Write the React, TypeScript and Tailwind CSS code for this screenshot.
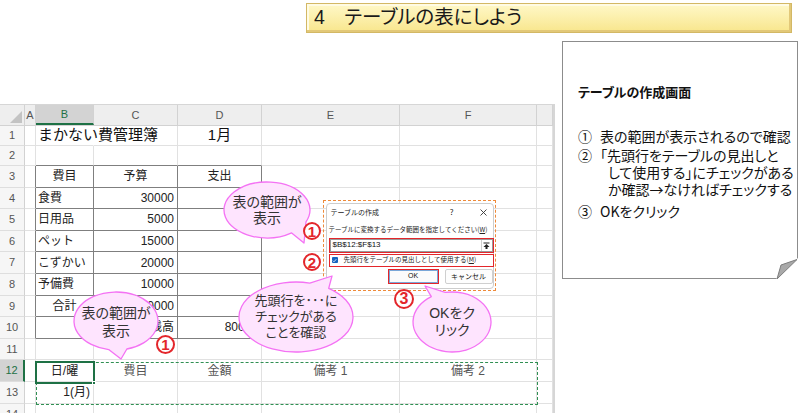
import React from 'react';

const COLS = [
  { k: 'A', w: 'w-[11px]' },
  { k: 'B', w: 'w-[58px]' },
  { k: 'C', w: 'w-[84px]' },
  { k: 'D', w: 'w-[84px]' },
  { k: 'E', w: 'w-[138px]' },
  { k: 'F', w: 'w-[137px]' },
  { k: 'G', w: 'w-[16px]' },
];

type Cell = { t: string; a?: 'l' | 'c' | 'r'; big?: boolean; gray?: boolean };
type Row = { n: number; h: string; cells: Partial<Record<string, Cell>> };

const ROWS: Row[] = [
  {
    n: 1,
    h: 'h-[20px]',
    cells: {
      B: { t: 'まかない費管理簿', a: 'l', big: true },
      D: { t: '1月', a: 'c', big: true },
    },
  },
  { n: 2, h: 'h-[20px]', cells: {} },
  { n: 3, h: 'h-[21.6px]', cells: { B: { t: '費目', a: 'c' }, C: { t: '予算', a: 'c' }, D: { t: '支出', a: 'c' } } },
  { n: 4, h: 'h-[21.6px]', cells: { B: { t: '食費' }, C: { t: '30000', a: 'r' } } },
  { n: 5, h: 'h-[21.6px]', cells: { B: { t: '日用品' }, C: { t: '5000', a: 'r' } } },
  { n: 6, h: 'h-[21.6px]', cells: { B: { t: 'ペット' }, C: { t: '15000', a: 'r' } } },
  { n: 7, h: 'h-[21.6px]', cells: { B: { t: 'こずかい' }, C: { t: '20000', a: 'r' } } },
  { n: 8, h: 'h-[21.6px]', cells: { B: { t: '予備費' }, C: { t: '10000', a: 'r' } } },
  { n: 9, h: 'h-[21.6px]', cells: { B: { t: '合計', a: 'c' }, C: { t: '60000', a: 'r' } } },
  { n: 10, h: 'h-[21.6px]', cells: { C: { t: '残高', a: 'r' }, D: { t: '80000', a: 'r' } } },
  { n: 11, h: 'h-[21.6px]', cells: {} },
  {
    n: 12,
    h: 'h-[21.6px]',
    cells: {
      B: { t: '日/曜', a: 'c' },
      C: { t: '費目', a: 'c', gray: true },
      D: { t: '金額', a: 'c', gray: true },
      E: { t: '備考 1', a: 'c', gray: true },
      F: { t: '備考 2', a: 'c', gray: true },
    },
  },
  { n: 13, h: 'h-[21.6px]', cells: { B: { t: '1(月)', a: 'r' } } },
  { n: 14, h: 'h-[21.6px]', cells: {} },
];

const TABLE_COLS = ['B', 'C', 'D'];

function Sheet() {
  return (
    <div className="relative mt-[71px] w-[555px] shrink-0 border-t border-r-2 border-[#d6d6d6]">
      {/* column headers */}
      <div className="flex h-[21px] bg-[#eeeeee] border-b border-[#d2d2d2]">
        <div className="relative w-[25px] shrink-0 border-r border-[#d2d2d2]">
          <svg className="absolute right-[2px] bottom-[2px]" width="12" height="12" viewBox="0 0 12 12">
            <polygon points="12,0 12,12 0,12" fill="#c3c3c3" />
          </svg>
        </div>
        {COLS.map((c) => (
          <div
            key={c.k}
            className={`${c.w} shrink-0 flex items-center justify-center text-[11px] border-r border-[#d2d2d2] ${
              c.k === 'B' ? 'bg-[#d3d3d3] text-[#1e7145] border-b-2 border-b-[#1e7145]' : 'text-[#555]'
            }`}
          >
            {c.k === 'G' ? '' : c.k}
          </div>
        ))}
      </div>
      {ROWS.map((r) => (
        <div key={r.n} className={`flex ${r.h}`}>
          <div
            className={`w-[25px] shrink-0 flex items-center justify-center text-[11px] border-b border-[#dedede] ${
              r.n === 12
                ? 'bg-[#d3d3d3] text-[#1e7145] border-r-2 border-r-[#1e7145]'
                : 'bg-[#f6f6f6] text-[#555] border-r border-r-[#d2d2d2]'
            }`}
          >
            {r.n}
          </div>
          {COLS.map((c) => {
            const inTable = r.n >= 3 && r.n <= 10 && TABLE_COLS.includes(c.k);
            const darkR = inTable || (c.k === 'A' && r.n >= 3 && r.n <= 10);
            const darkB = inTable || (r.n === 2 && TABLE_COLS.includes(c.k));
            const cell = r.cells[c.k];
            const align =
              cell?.a === 'c' ? 'justify-center' : cell?.a === 'r' ? 'justify-end pr-[3px]' : 'justify-start pl-[2px]';
            const noGrid = r.n === 1 && c.k === 'B';
            return (
              <div
                key={c.k}
                className={`${c.w} shrink-0 flex items-center whitespace-nowrap border-r border-b ${align} ${
                  noGrid ? 'border-r-transparent' : darkR ? 'border-r-[#7f7f7f]' : 'border-r-[#e1e1e1]'
                } ${darkB ? 'border-b-[#7f7f7f]' : 'border-b-[#e1e1e1]'} ${
                  cell?.big ? 'text-[15px] text-[#111]' : cell?.gray ? 'text-[12px] text-[#555]' : 'text-[12px] text-[#222]'
                }`}
              >
                {cell?.t}
              </div>
            );
          })}
        </div>
      ))}
      {/* copy marquee B12:F13 */}
      <div className="absolute left-[36px] top-[257px] w-[502px] h-[43px] border border-dashed border-[#2f8f52]" />
      {/* active cell B12 */}
      <div className="absolute left-[35px] top-[256px] w-[60px] h-[23px] border-2 border-[#1e7145]">
        <div className="absolute -right-[3px] -bottom-[3px] w-[4px] h-[4px] bg-[#1e7145] border border-white" />
      </div>
    </div>
  );
}

function Note() {
  return (
    <div className="relative ml-[7px] mt-[8px] w-[236px] h-[238px] shrink-0 border border-[#8c8c8c] bg-white pl-[15px] pt-[41px] text-[#111] font-['Noto_Sans_CJK_JP',sans-serif] [font-feature-settings:'palt']">
      <p className="text-[13px] font-bold leading-[18px]">テーブルの作成画面</p>
      <div className="mt-[27px] text-[14px] leading-[17px]">
        <div className="flex">
          <span className="w-[22px] shrink-0">①</span>
          <span>表の範囲が表示されるので確認</span>
        </div>
        <div className="mt-[2px] flex">
          <span className="w-[22px] shrink-0">②</span>
          <div>
            <div>「先頭行をテーブルの見出しと</div>
            <div className="pl-[8px]">して使用する」にチェックがある</div>
            <div className="pl-[8px]">か確認→なければチェックする</div>
          </div>
        </div>
        <div className="mt-[5px] flex">
          <span className="w-[22px] shrink-0">③</span>
          <span>OKをクリック</span>
        </div>
      </div>
      <svg className="absolute -right-[1px] -bottom-[1px]" width="22" height="21" viewBox="0 0 22 21">
        <polygon points="0,21 22,21 22,0" fill="#fff" />
        <polygon points="1,21 21,1.5 5,7" fill="#a9a9a9" stroke="#7d7d7d" strokeWidth="1" strokeLinejoin="round" />
      </svg>
    </div>
  );
}

function bubble(cx: number, cy: number, rx: number, ry: number, a1: number, a2: number, tx: number, ty: number) {
  const p = (a: number) => [cx + rx * Math.cos((a * Math.PI) / 180), cy + ry * Math.sin((a * Math.PI) / 180)];
  const [x1, y1] = p(a1);
  const [x2, y2] = p(a2);
  return `M${x2} ${y2} A${rx} ${ry} 0 1 1 ${x1} ${y1} L${tx} ${ty} Z`;
}

const BUBBLES = [
  bubble(267, 210, 43, 28, 25, 55, 304, 243),
  bubble(116, 321, 42, 29, 75, 100, 121, 359),
  bubble(296, 317, 57, 35, -76, -55, 332, 276),
  bubble(452, 322, 39, 30, -122, -100, 425, 286),
];

function Num({ n, cls }: { n: string; cls: string }) {
  return (
    <div
      className={`absolute rounded-full bg-white border-2 border-[#e3262b] flex items-center justify-center font-bold text-[#e3262b] leading-none font-['Liberation_Sans',sans-serif] ${cls}`}
    >
      {n}
    </div>
  );
}

function Dialog() {
  return (
    <div className="absolute left-[323px] top-[200px] w-[173px] h-[91px] border-[1.5px] border-dashed border-[#ee8a3a] p-[1.5px] font-['Noto_Sans_CJK_JP',sans-serif]">
      <div className="h-full bg-white border border-[#cdcdcd] rounded-[4px] flex flex-col pl-[2px]">
        <div className="h-[17px] flex items-center pl-[2px] text-[7px] text-[#222]">
          <span>テーブルの作成</span>
          <span className="ml-auto mr-[26px] text-[8px]">?</span>
          <svg width="7" height="7" viewBox="0 0 7 7" className="mr-[6px]">
            <path d="M0.5 0.5 L6.5 6.5 M6.5 0.5 L0.5 6.5" stroke="#333" strokeWidth="0.9" />
          </svg>
        </div>
        <div className="mt-[4px] h-[10px] flex items-center text-[6.5px] text-[#222] whitespace-nowrap">
          テーブルに変換するデータ範囲を指定してください(<span className="underline">W</span>)
        </div>
        <div className="mt-[3px] w-[165px] h-[15px] border-[1.5px] border-[#e3262b] flex">
          <div className="flex-1 bg-white border border-[#9a9a9a] flex items-center pl-[2px] text-[8px] text-[#111] font-['Liberation_Sans',sans-serif]">
            $B$12:$F$13
            <div className="ml-auto h-full w-[11px] flex items-center justify-center border-l border-[#d0d0d0]">
              <svg width="7" height="7" viewBox="0 0 7 7">
                <path d="M0.5 1 H6.5" stroke="#222" strokeWidth="1" />
                <polygon points="3.5,2 6.5,5 0.5,5" fill="#222" />
                <rect x="2.5" y="5" width="2" height="2" fill="#222" />
              </svg>
            </div>
          </div>
        </div>
        <div className="mt-[1px] w-[165px] h-[13px] border-[1.5px] border-[#e3262b] flex items-center pl-[2px] text-[6.5px] text-[#222] whitespace-nowrap">
          <div className="w-[6px] h-[6px] rounded-[1px] bg-[#1565c0] flex items-center justify-center mr-[6px]">
            <svg width="5" height="5" viewBox="0 0 5 5">
              <path d="M0.8 2.6 L2 3.8 L4.3 1.2" stroke="#fff" strokeWidth="0.8" fill="none" />
            </svg>
          </div>
          先頭行をテーブルの見出しとして使用する(<span className="underline">M</span>)
        </div>
        <div className="mt-[2px] flex pl-[59px] gap-[6px]">
          <div className="w-[51px] h-[15px] border-[1.5px] border-[#e3262b] flex">
            <div className="flex-1 bg-[#fbfbfb] border border-[#7aa7d8] flex items-center justify-center text-[7px] text-[#111] font-['Liberation_Sans',sans-serif]">
              OK
            </div>
          </div>
          <div className="w-[48px] h-[15px] bg-[#fdfdfd] border border-[#cfcfcf] rounded-[2px] flex items-center justify-center text-[7px] text-[#111]">
            キャンセル
          </div>
        </div>
      </div>
    </div>
  );
}

export default function App() {
  return (
    <div className="relative w-[800px] h-[413px] overflow-hidden bg-white font-['Liberation_Sans','Noto_Sans_CJK_JP',sans-serif]">
      <div className="ml-[306px] mt-[3px] w-[486px] h-[30px] flex items-center pl-[7px] bg-linear-to-b from-[#fff8c8] to-[#f8e68c] border border-[#d3b865] shadow-[inset_-2px_-2px_0_#e2c878,inset_2px_2px_0_#fffbe3] text-[19.5px] text-[#1a1a1a] [font-feature-settings:'palt']">
        4　テーブルの表にしよう
      </div>
      <div className="flex items-start">
        <Sheet />
        <Note />
      </div>

      <Dialog />

      <svg className="absolute left-0 top-0 pointer-events-none" width="800" height="413" viewBox="0 0 800 413">
        {BUBBLES.map((d, i) => (
          <path key={i} d={d} fill="#fee4fe" stroke="#f472f4" strokeWidth="1.3" strokeLinejoin="round" />
        ))}
      </svg>

      <div className="absolute left-[267px] top-[210px] -translate-x-1/2 -translate-y-1/2 text-center text-[14px] leading-[16px] text-[#333] whitespace-nowrap [font-feature-settings:'palt']">
        表の範囲が
        <br />
        表示
      </div>
      <div className="absolute left-[116px] top-[322px] -translate-x-1/2 -translate-y-1/2 text-center text-[14px] leading-[18px] text-[#333] whitespace-nowrap [font-feature-settings:'palt']">
        表の範囲が
        <br />
        表示
      </div>
      <div className="absolute left-[296px] top-[317px] -translate-x-1/2 -translate-y-1/2 text-center text-[13px] leading-[16px] text-[#333] whitespace-nowrap [font-feature-settings:'palt']">
        先頭行を･･･に
        <br />
        チェックがある
        <br />
        ことを確認
      </div>
      <div className="absolute left-[452px] top-[322px] -translate-x-1/2 -translate-y-1/2 text-center text-[14px] leading-[17px] text-[#333] whitespace-nowrap [font-feature-settings:'palt']">
        OKをク
        <br />
        リック
      </div>

      <Num n="1" cls="left-[303px] top-[222px] w-[18px] h-[18px] text-[15px]" />
      <Num n="2" cls="left-[303px] top-[253px] w-[18px] h-[18px] text-[15px]" />
      <Num n="3" cls="left-[394px] top-[289px] w-[20px] h-[20px] text-[16px]" />
      <Num n="1" cls="left-[156px] top-[335px] w-[19px] h-[19px] text-[15px]" />
    </div>
  );
}
